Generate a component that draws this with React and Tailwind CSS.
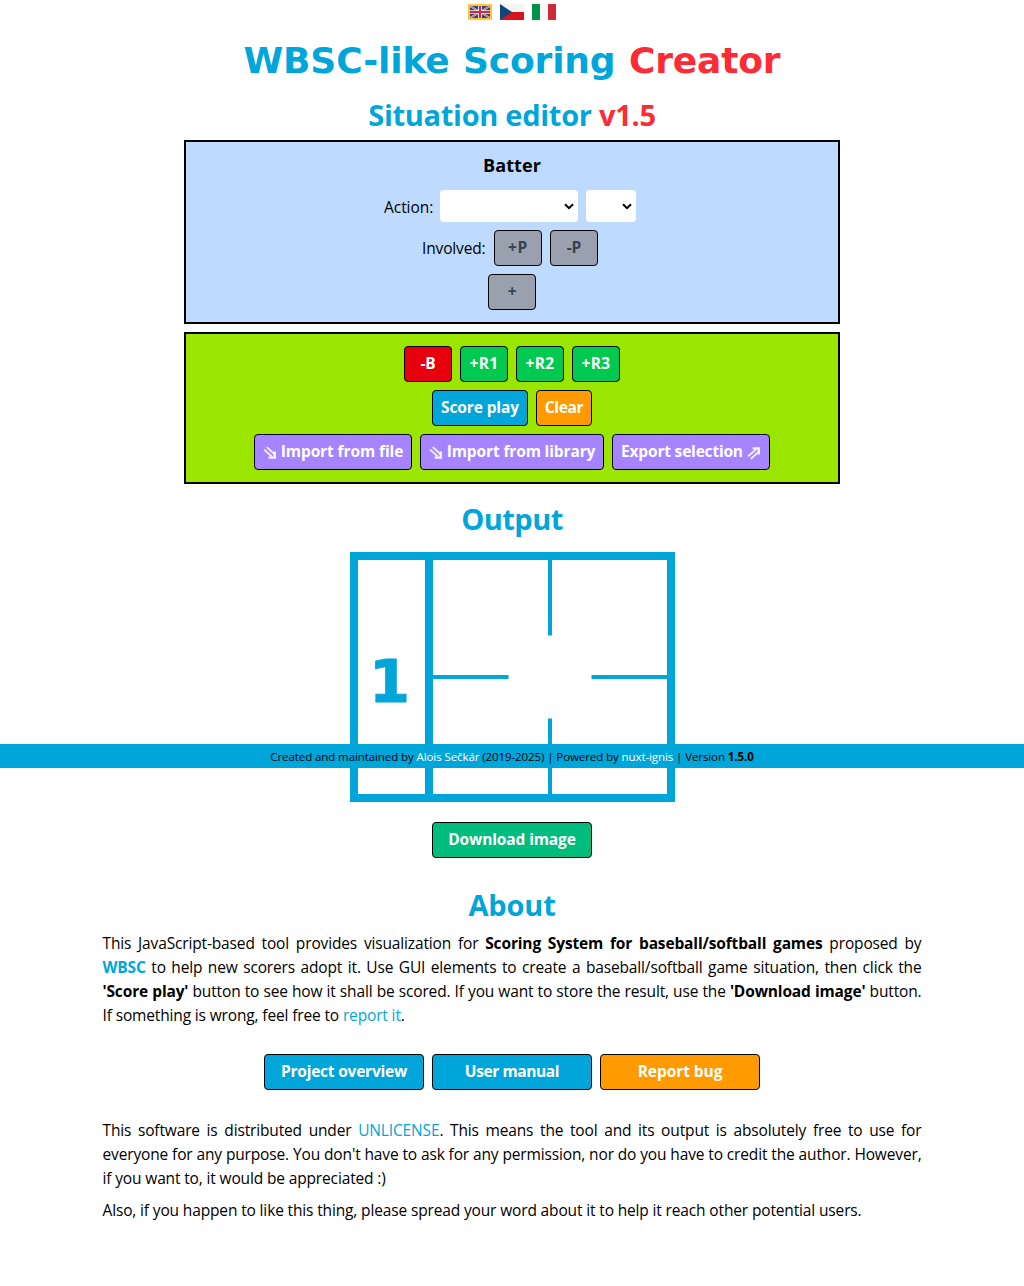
import React from 'react';

const BASE = 'flex h-9 shrink-0 items-center justify-center whitespace-pre rounded border border-black pb-px text-[15.5px] leading-[23px] font-bold';

function Button({ className, children, ...rest }) {
  return <button className={`${BASE} ${className}`} {...rest}>{children}</button>;
}

function Line({ last, children }) {
  return <span className={last ? 'block whitespace-nowrap' : 'block [text-align-last:justify]'}>{children}</span>;
}

function Arrow({ up }) {
  return (
    <svg width="14" height="14" viewBox="0 0 14 14" className={up ? 'ml-1 mt-[3px] -scale-y-100' : 'mr-1 mt-[3px]'} fill="none" stroke="white" strokeOpacity="0.9">
      <path strokeWidth="1.8" d="M1 3.6L9 10.6M3.8 1.2L11.4 8" />
      <path strokeWidth="2.4" d="M11.8 5.6V11.6H5.6" />
    </svg>
  );
}

function Chevron() {
  return (
    <svg width="10" height="7" viewBox="0 0 10 7" fill="none" stroke="black" strokeWidth="2">
      <path d="M1 1.2L5 5.2L9 1.2" />
    </svg>
  );
}

function Select({ className }) {
  return (
    <button className={`flex h-8 items-center justify-end rounded bg-white pr-1 ${className}`}>
      <Chevron />
    </button>
  );
}

function Flags() {
  return (
    <div className="flex h-6 items-center justify-center gap-2">
      <svg width="24" height="16" viewBox="0 0 24 16">
        <path fill="#ffc92c" d="M0 0h24v16H0z" />
        <path fill="#2e3f7e" d="M2 2h20v12H2z" />
        <path stroke="#e4dfe8" strokeWidth="2" d="M2 2l20 12M22 2L2 14" />
        <path stroke="#d0384c" strokeWidth="0.8" d="M2 2l20 12M22 2L2 14" />
        <path stroke="#fff" strokeWidth="3.6" d="M12 2v12M2 8h20" />
        <path stroke="#d0283c" strokeWidth="2" d="M12 2v12M2 8h20" />
      </svg>
      <svg width="24" height="16" viewBox="0 0 24 16">
        <path fill="#f4f4f4" d="M0 0h24v8H0z" />
        <path fill="#d7141a" d="M0 8h24v8H0z" />
        <path fill="#11457e" d="M0 0l12 8L0 16z" />
      </svg>
      <svg width="24" height="16" viewBox="0 0 24 16">
        <path fill="#009246" d="M0 0h8v16H0z" />
        <path fill="#f6f6f6" d="M8 0h8v16H8z" />
        <path fill="#ce2b37" d="M16 0h8v16h-8z" />
      </svg>
    </div>
  );
}

function Diagram() {
  return (
    <svg width="325" height="250" viewBox="0 0 325 250" className="mx-auto block" fill="none" stroke="#00a6da">
      <rect x="4" y="4" width="317" height="242" strokeWidth="8" />
      <path strokeWidth="8" d="M79 4v242" />
      <path strokeWidth="4" d="M200 8v75.5M200 166.5v75.5M83 125h75.5M241.5 125h75.5" />
      <text x="39.5" y="149.5" textAnchor="middle" fill="#00a6da" strokeWidth="1" className="font-['DejaVu_Sans'] text-[59px] font-bold">1</text>
    </svg>
  );
}

const H2 = 'text-center text-[29px] leading-9 font-bold text-[#00a6da]';

export default function App() {
  return (
    <div className="relative h-[1286px] w-[1024px] overflow-hidden bg-white font-['Open_Sans',sans-serif] text-[15.5px] leading-6 tracking-[-0.145px] text-black">
      <Flags />
      <h1 className="mt-[17px] text-center font-['DejaVu_Sans',sans-serif] text-[36px] leading-10 font-bold tracking-[-0.14px] [word-spacing:1px] text-[#00a6da]">
        WBSC-like Scoring <span className="text-[#fb2c36]">Creator</span>
      </h1>
      <h2 className={`mt-[16px] tracking-[-0.28px] ${H2}`}>Situation editor <span className="text-[#fb2c36]">v1.5</span></h2>

      <section className="mx-auto mt-[7px] flex h-[184px] w-[656px] flex-col items-center border-2 border-black bg-[#bedbff] pt-[9px]">
        <h3 className="text-[18px] leading-7 font-bold tracking-[0.1px]">Batter</h3>
        <div className="mt-[11px] flex h-8 w-64 items-center">
          <span className="mt-[2px] w-14 tracking-[-0.05px]">Action:</span>
          <Select className="w-[138px]" />
          <Select className="ml-2 w-[50px]" />
        </div>
        <div className="mt-2 flex w-[180px] items-center">
          <span className="w-[72px] pb-px">Involved:</span>
          <Button className="w-12 bg-[#99a1af] text-[#364153] tracking-[0.8px]">+P</Button>
          <Button className="ml-2 w-12 bg-[#99a1af] text-[#364153]">-P</Button>
        </div>
        <Button className="mt-2 w-12 bg-[#99a1af] text-[#364153]">+</Button>
      </section>

      <section className="mx-auto mt-2 flex h-[152px] w-[656px] flex-col items-center gap-2 border-2 border-black bg-[#9ae600] pt-3 text-white">
        <div className="flex gap-2">
          <Button className="w-12 bg-[#e7000b]">-B</Button>
          <Button className="w-12 bg-[#00c950] tracking-[0.4px]">+R1</Button>
          <Button className="w-12 bg-[#00c950] tracking-[0.4px]">+R2</Button>
          <Button className="w-12 bg-[#00c950] tracking-[0.4px]">+R3</Button>
        </div>
        <div className="flex gap-2">
          <Button className="w-24 bg-[#00a6da] tracking-[-0.12px]">Score play</Button>
          <Button className="w-14 bg-[#ff9a00] tracking-[-0.35px]">Clear</Button>
        </div>
        <div className="flex gap-2">
          <Button className="w-[158px] bg-[#a684ff] tracking-[-0.1px]"><Arrow />Import from file</Button>
          <Button className="w-[184px] bg-[#a684ff] tracking-[-0.13px]"><Arrow />Import from library</Button>
          <Button className="w-[158px] bg-[#a684ff] tracking-[-0.19px]">Export selection<Arrow up /></Button>
        </div>
      </section>

      <h2 className={`mt-[17px] mb-[15px] tracking-[-0.5px] ${H2}`}>Output</h2>
      <Diagram />
      <Button className="mx-auto mt-5 w-40 bg-[#00bc7d] text-white tracking-[-0.13px]">Download image</Button>

      <h2 className={`mt-[29px] ${H2}`}>About</h2>
      <main className="mx-auto mt-2 w-[819px]">
        <p>
          <Line>This JavaScript-based tool provides visualization for <b>Scoring System for baseball/softball games</b> proposed by</Line>
          <Line><b className="text-[#00a6da]">WBSC</b> to help new scorers adopt it. Use GUI elements to create a baseball/softball game situation, then click the</Line>
          <Line><b>'Score play'</b> button to see how it shall be scored. If you want to store the result, use the <b>'Download image'</b> button.</Line>
          <Line last>If something is wrong, feel free to <a className="text-[#00a6da]">report it</a>.</Line>
        </p>
        <div className="mt-[27px] flex justify-center gap-2 text-white">
          <Button className="w-40 bg-[#00a6da] tracking-[-0.22px]">Project overview</Button>
          <Button className="w-40 bg-[#00a6da] tracking-[-0.4px]">User manual</Button>
          <Button className="w-40 bg-[#ff9a00] tracking-[-0.07px]">Report bug</Button>
        </div>
        <p className="mt-7">
          <Line>This software is distributed under <a className="text-[#00a6da]">UNLICENSE</a>. This means the tool and its output is absolutely free to use for</Line>
          <Line>everyone for any purpose. You don't have to ask for any permission, nor do you have to credit the author. However,</Line>
          <Line last>if you want to, it would be appreciated :)</Line>
        </p>
        <p className="mt-2 whitespace-nowrap">Also, if you happen to like this thing, please spread your word about it to help it reach other potential users.</p>
      </main>

      <footer className="absolute top-[744px] left-0 h-6 w-full bg-[#00a6da] pt-px text-center text-[11.5px] tracking-[-0.09px]">
        Created and maintained by <a className="text-white">Alois Sečkár</a> (2019-2025) | Powered by <a className="text-white">nuxt-ignis</a> | Version <b>1.5.0</b>
      </footer>
    </div>
  );
}
